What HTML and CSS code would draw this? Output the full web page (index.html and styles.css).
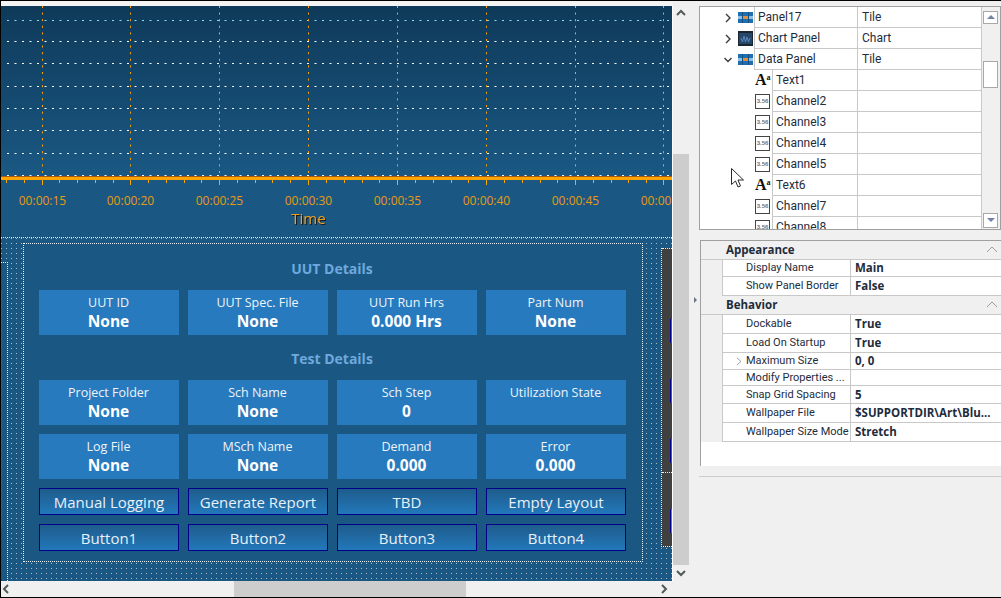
FILE: index.html
```html
<!DOCTYPE html>
<html lang="en">
<head>
  <meta charset="UTF-8">
  <title>Layout Designer</title>
  <link rel="stylesheet" href="styles.css">
</head>
<body>
  <div class="window">
    <!-- Designer canvas -->
    <div class="designer">
      <div class="top-strip"></div>
      <div class="viewport">
        <div class="canvas">
          <svg class="chart" width="671" height="231" viewBox="1 6 671 231">
            <defs>
              <linearGradient id="plotFill" x1="0" y1="0" x2="0" y2="1">
                <stop offset="0" stop-color="#0f3a5a"/>
                <stop offset="1" stop-color="#1a5883"/>
              </linearGradient>
            </defs>
            <rect x="1" y="6" width="671" height="171" fill="url(#plotFill)"/>
            <rect x="1" y="177" width="671" height="60" fill="#1a5883"/>
            <g class="grid-h">
              <path class="grid-first" d="M7 20.5H672"/>
              <path d="M7 41.5H672M7 63.5H672M7 86.5H672M7 108.5H672M7 130.5H672M7 153.5H672M7 175.5H672"/>
            </g>
            <path class="grid-v" d="M42.5 6V176M130.5 6V176M219.5 6V176M308.5 6V176M397.5 6V176M486.5 6V176M575.5 6V176M663.5 6V176"/>
            <rect x="1" y="176" width="671" height="1" fill="#a85a10"/>
            <rect x="1" y="177" width="671" height="3" fill="#ffa500"/>
            <path class="tick" d="M6.5 180V183M24.5 180V183M59.5 180V183M77.5 180V183M95.5 180V183M113.5 180V183M148.5 180V183M166.5 180V183M184.5 180V183M201.5 180V183M237.5 180V183M255.5 180V183M272.5 180V183M290.5 180V183M326.5 180V183M344.5 180V183M362.5 180V183M379.5 180V183M415.5 180V183M433.5 180V183M451.5 180V183M468.5 180V183M504.5 180V183M522.5 180V183M540.5 180V183M557.5 180V183M593.5 180V183M611.5 180V183M628.5 180V183M646.5 180V183"/>
            <path class="tick" d="M42.5 180V185M130.5 180V185M219.5 180V185M308.5 180V185M397.5 180V185M486.5 180V185M575.5 180V185M663.5 180V185"/>
            <g class="tick-labels">
              <text x="42.5" y="205">00:00:15</text>
              <text x="130.5" y="205">00:00:20</text>
              <text x="219.5" y="205">00:00:25</text>
              <text x="308.5" y="205">00:00:30</text>
              <text x="397.5" y="205">00:00:35</text>
              <text x="486.5" y="205">00:00:40</text>
              <text x="575.5" y="205">00:00:45</text>
              <text x="664.5" y="205">00:00:50</text>
            </g>
            <text class="axis-title" x="308.5" y="224">Time</text>
          </svg>

          <div class="lower">
            <div class="stub-left"><div class="stub-edge"></div></div>

            <div class="details">
              <h2 class="section-title">UUT Details</h2>
              <div class="card-grid">
                <div class="card"><span class="card-label">UUT ID</span><span class="card-value">None</span></div>
                <div class="card"><span class="card-label">UUT Spec. File</span><span class="card-value">None</span></div>
                <div class="card"><span class="card-label">UUT Run Hrs</span><span class="card-value">0.000 Hrs</span></div>
                <div class="card"><span class="card-label">Part Num</span><span class="card-value">None</span></div>
              </div>
              <h2 class="section-title second">Test Details</h2>
              <div class="card-grid">
                <div class="card"><span class="card-label">Project Folder</span><span class="card-value">None</span></div>
                <div class="card"><span class="card-label">Sch Name</span><span class="card-value">None</span></div>
                <div class="card"><span class="card-label">Sch Step</span><span class="card-value">0</span></div>
                <div class="card"><span class="card-label">Utilization State</span></div>
                <div class="card"><span class="card-label">Log File</span><span class="card-value">None</span></div>
                <div class="card"><span class="card-label">MSch Name</span><span class="card-value">None</span></div>
                <div class="card"><span class="card-label">Demand</span><span class="card-value">0.000</span></div>
                <div class="card"><span class="card-label">Error</span><span class="card-value">0.000</span></div>
                <button class="action">Manual Logging</button>
                <button class="action">Generate Report</button>
                <button class="action">TBD</button>
                <button class="action">Empty Layout</button>
                <button class="action">Button1</button>
                <button class="action">Button2</button>
                <button class="action">Button3</button>
                <button class="action">Button4</button>
              </div>
            </div>

            <div class="stub-right">
              <div class="stub-section first">
                <div class="stub-bar"></div>
                <div class="stub-bar"></div>
                <div class="stub-bar"></div>
              </div>
              <div class="stub-section">
                <div class="stub-bar warm"></div>
              </div>
            </div>
          </div>
        </div>

        <div class="vscroll">
          <div class="arrow-box up">
            <svg width="10" height="7" viewBox="0 0 10 7"><path class="chev-bold" d="M1 6L5 2L9 6"/></svg>
          </div>
          <div class="vthumb"></div>
          <div class="arrow-box down">
            <svg width="10" height="7" viewBox="0 0 10 7"><path class="chev-bold" d="M1 1L5 5L9 1"/></svg>
          </div>
        </div>
      </div>
      <div class="hscroll">
        <svg class="hs-left" width="7" height="10" viewBox="0 0 7 10"><path class="chev-bold" d="M6 1L2 5L6 9"/></svg>
        <div class="hthumb"></div>
        <svg class="hs-right" width="7" height="10" viewBox="0 0 7 10"><path class="chev-bold" d="M1 1L5 5L1 9"/></svg>
      </div>
    </div>

    <!-- Splitter -->
    <div class="splitter"><div class="splitter-arrow"></div></div>

    <!-- Right side panels -->
    <div class="side">
      <div class="tree">
        <div class="tree-body">
          <div class="tree-row">
            <div class="gutter top">
              <svg class="chev" width="8" height="10" viewBox="0 0 8 10"><path d="M2 1L6 5L2 9"/></svg>
              <svg class="tile-icon" width="15" height="11" viewBox="0 0 15 11"><use href="#tile"/></svg>
            </div>
            <div class="name-cell">Panel17</div>
            <div class="type-cell">Tile</div>
          </div>
          <div class="tree-row">
            <div class="gutter top">
              <svg class="chev" width="8" height="10" viewBox="0 0 8 10"><path d="M2 1L6 5L2 9"/></svg>
              <svg class="tile-icon" width="15" height="15" viewBox="0 0 15 15">
                <rect width="15" height="15" fill="#1c2630"/>
                <rect x="1" y="2" width="13" height="11" fill="#24476a"/>
                <path d="M3 7L4.5 11L6 5L7.5 11L9 6L10.5 11L12 7" fill="none" stroke="#5a86c0" stroke-width="1"/>
              </svg>
            </div>
            <div class="name-cell">Chart Panel</div>
            <div class="type-cell">Chart</div>
          </div>
          <div class="tree-row">
            <div class="gutter top">
              <svg class="chev" width="8" height="10" viewBox="0 0 8 10"><path d="M0.5 3L4 6.5L7.5 3"/></svg>
              <svg class="tile-icon" width="15" height="11" viewBox="0 0 15 11">
                <g id="tile">
                  <rect width="15" height="11" fill="#1f6fb0"/>
                  <rect y="4" width="15" height="3" fill="#8fc0e2"/>
                  <rect x="5" y="4" width="5" height="3" fill="#e09040"/>
                  <path d="M4.5 0V11M10.5 0V11" stroke="#124f84" stroke-width="1"/>
                </g>
              </svg>
            </div>
            <div class="name-cell">Data Panel</div>
            <div class="type-cell">Tile</div>
          </div>
          <div class="tree-row">
            <div class="gutter child"><span class="text-icon">A<span class="text-icon-sup">a</span></span></div>
            <div class="name-cell">Text1</div>
            <div class="type-cell"></div>
          </div>
          <div class="tree-row">
            <div class="gutter child"><span class="num-icon">3.56</span></div>
            <div class="name-cell">Channel2</div>
            <div class="type-cell"></div>
          </div>
          <div class="tree-row">
            <div class="gutter child"><span class="num-icon">3.56</span></div>
            <div class="name-cell">Channel3</div>
            <div class="type-cell"></div>
          </div>
          <div class="tree-row">
            <div class="gutter child"><span class="num-icon">3.56</span></div>
            <div class="name-cell">Channel4</div>
            <div class="type-cell"></div>
          </div>
          <div class="tree-row">
            <div class="gutter child"><span class="num-icon">3.56</span></div>
            <div class="name-cell">Channel5</div>
            <div class="type-cell"></div>
          </div>
          <div class="tree-row">
            <div class="gutter child"><span class="text-icon">A<span class="text-icon-sup">a</span></span></div>
            <div class="name-cell">Text6</div>
            <div class="type-cell"></div>
          </div>
          <div class="tree-row">
            <div class="gutter child"><span class="num-icon">3.56</span></div>
            <div class="name-cell">Channel7</div>
            <div class="type-cell"></div>
          </div>
          <div class="tree-row">
            <div class="gutter child"><span class="num-icon">3.56</span></div>
            <div class="name-cell">Channel8</div>
            <div class="type-cell"></div>
          </div>
        </div>
        <div class="tree-scroll">
          <div class="ts-button up"><div class="tri-up"></div></div>
          <div class="ts-thumb"></div>
          <div class="ts-button down"><div class="tri-down"></div></div>
        </div>
      </div>

      <div class="props">
        <div class="prop-head">
          <span>Appearance</span>
          <svg width="12" height="7" viewBox="0 0 12 7"><path class="chev-light" d="M1 6L6 1L11 6"/></svg>
        </div>
        <div class="prop-row h17"><div class="prop-name">Display Name</div><div class="prop-value">Main</div></div>
        <div class="prop-row"><div class="prop-name">Show Panel Border</div><div class="prop-value">False</div></div>
        <div class="prop-head">
          <span>Behavior</span>
          <svg width="12" height="7" viewBox="0 0 12 7"><path class="chev-light" d="M1 6L6 1L11 6"/></svg>
        </div>
        <div class="prop-row"><div class="prop-name">Dockable</div><div class="prop-value">True</div></div>
        <div class="prop-row"><div class="prop-name">Load On Startup</div><div class="prop-value">True</div></div>
        <div class="prop-row h17">
          <div class="prop-name">
            <svg class="prop-chev" width="6" height="9" viewBox="0 0 6 9"><path class="chev-light" d="M1 1L5 4.5L1 8"/></svg>
            Maximum Size
          </div>
          <div class="prop-value">0, 0</div>
        </div>
        <div class="prop-row h16"><div class="prop-name">Modify Properties ...</div><div class="prop-value"></div></div>
        <div class="prop-row h18"><div class="prop-name">Snap Grid Spacing</div><div class="prop-value">5</div></div>
        <div class="prop-row"><div class="prop-name">Wallpaper File</div><div class="prop-value">$SUPPORTDIR\Art\Blu...</div></div>
        <div class="prop-row"><div class="prop-name">Wallpaper Size Mode</div><div class="prop-value">Stretch</div></div>
      </div>

      <div class="side-rule"></div>
    </div>

    <!-- Mouse pointer -->
    <svg class="pointer" width="13" height="20" viewBox="0 0 13 20">
      <path d="M0.5 0.5V16.5L4.5 13L7 19L9.5 18L7 12H12.5Z" fill="#fff" stroke="#2a2a2a" stroke-width="1"/>
    </svg>
  </div>
</body>
</html>
```

FILE: styles.css
```css
/* General Styles */
* {
  box-sizing: border-box;
}

html, body {
  margin: 0;
  padding: 0;
}

body {
  width: 1001px;
  height: 598px;
  overflow: hidden;
  background-color: #f0f0f0;
  font-family: 'Open Sans', sans-serif;
}

.window {
  position: relative;
  display: flex;
  width: 1001px;
  height: 598px;
  border-top: 1px solid #000;
  border-bottom: 1px solid #000;
  border-left: 1px solid #000;
}

/* Designer */
.designer {
  display: flex;
  flex-direction: column;
  width: 688px;
}

.top-strip {
  height: 5px;
  background-color: #f4f4f4;
  margin-right: 16px;
}

.viewport {
  display: flex;
  height: 575px;
}

.canvas {
  width: 672px;
  border-right: 1px solid #fff;
  background-color: #1a5883;
}

.vscroll {
  display: flex;
  flex-direction: column;
  width: 16px;
  margin-top: -5px;
  height: 580px;
}

.arrow-box {
  display: flex;
  align-items: center;
  justify-content: center;
}

.arrow-box.up {
  height: 22px;
  margin-bottom: 131px;
}

.arrow-box.down {
  height: 16px;
}

.vthumb {
  height: 411px;
  background-color: #cdcdcd;
}

.chev-bold {
  fill: none;
  stroke: #505a5a;
  stroke-width: 2;
}

.hscroll {
  display: flex;
  align-items: center;
  height: 16px;
  width: 672px;
  padding-left: 1px;
}

.hs-left {
  margin-right: 225px;
}

.hthumb {
  width: 232px;
  height: 16px;
  background-color: #cdcdcd;
}

.hs-right {
  margin-left: 195px;
}

/* Chart */
.chart {
  display: block;
}

.grid-h path {
  fill: none;
  stroke: #fff;
  stroke-width: 1;
  stroke-dasharray: 2 5.5;
}

.grid-h .grid-first {
  stroke: #8fdcff;
}

.grid-v {
  fill: none;
  stroke: #ffa500;
  stroke-width: 1;
  stroke-dasharray: 2 4.6;
}

.tick {
  fill: none;
  stroke: #ffa500;
  stroke-width: 1;
}

.tick-labels text {
  fill: #e89a12;
  font-family: 'Open Sans', sans-serif;
  font-size: 12px;
  text-anchor: middle;
}

.axis-title {
  fill: #f0a020;
  font-family: 'Open Sans', sans-serif;
  font-size: 15px;
  text-anchor: middle;
  filter: drop-shadow(1px 1px 0 #1a1a1a);
}

/* Lower area */
.lower {
  display: flex;
  align-items: flex-start;
  height: 344px;
  border-top: 1px dotted #dfe8ee;
  background-color: #1a5883;
  background-image: radial-gradient(circle at 0.5px 0.5px, #a9bcc8 0.5px, transparent 0.55px);
  background-size: 5px 5px;
}

.stub-left {
  width: 7px;
  height: 319px;
  margin-top: 24px;
  padding-top: 27px;
  background-color: #1a5883;
  border-top: 1px dotted #e8eef2;
  border-right: 1px dotted #e8eef2;
}

.stub-edge {
  width: 1px;
  height: 238px;
  background-color: #8a4a14;
}

.details {
  width: 620px;
  height: 319px;
  margin-top: 5px;
  margin-left: 15px;
  padding: 14px 15px 0;
  background-color: #1a5883;
  border: 1px dotted #e8eef2;
}

.section-title {
  height: 22px;
  margin: 0 0 10px;
  padding-right: 2px;
  color: #6fa8dc;
  font-size: 14px;
  font-weight: 700;
  line-height: 22px;
  text-align: center;
}

.section-title.second {
  margin-top: 13px;
}

.card-grid {
  display: grid;
  grid-template-columns: repeat(4, 140px);
  gap: 9px;
}

.card {
  display: flex;
  flex-direction: column;
  align-items: center;
  height: 45px;
  padding: 3px 1px 0 0;
  background-color: #277abd;
  color: #fff;
}

.card-label {
  height: 19px;
  font-size: 12.5px;
  line-height: 19px;
  color: #eef4fa;
}

.card-value {
  height: 20px;
  margin-top: -1px;
  font-size: 15.5px;
  font-weight: 700;
  line-height: 20px;
}

.action {
  height: 27px;
  padding: 0;
  border: 1px solid #00008b;
  background: linear-gradient(#1f5c8c, #2278ba);
  color: #e8f0f8;
  font-family: 'Open Sans', sans-serif;
  font-size: 15px;
}

.stub-right {
  width: 11px;
  height: 299px;
  margin-top: 10px;
  margin-left: 18px;
  background-color: #404040;
  border-left: 1px dotted #e8eef2;
  border-bottom: 1px dotted #e8eef2;
}

.stub-section {
  display: flex;
  flex-direction: column;
  align-items: flex-end;
  height: 74px;
  padding-top: 36px;
  border-top: 1px dotted #e8eef2;
}

.stub-section.first {
  height: 224px;
  padding-top: 70px;
}

.stub-bar {
  flex: none;
  width: 2px;
  height: 24px;
  margin-bottom: 36px;
  border-left: 1px solid #00008b;
  background-color: #1f6cab;
}

.stub-bar.warm {
  background-color: #b06a30;
}

/* Splitter */
.splitter {
  width: 10px;
  padding: 296px 0 0 5px;
}

.splitter-arrow {
  width: 0;
  height: 0;
  border-top: 3px solid transparent;
  border-bottom: 3px solid transparent;
  border-left: 3px solid #6a7480;
}

/* Side panels */
.side {
  display: flex;
  flex-direction: column;
  width: 302px;
  padding-top: 5px;
  color: #1e2c3c;
  font-family: 'Roboto', sans-serif;
  font-size: 12px;
}

.tree {
  display: flex;
  height: 224px;
  border: 1px solid #a0a0a0;
  background-color: #fff;
  overflow: hidden;
}

.tree-body {
  width: 282px;
  flex: none;
}

.tree-row {
  display: flex;
  height: 21px;
  line-height: 21px;
}

.gutter {
  display: flex;
  align-items: center;
  flex: none;
  height: 21px;
}

.gutter.top {
  width: 54px;
  padding-left: 24px;
}

.gutter.child {
  width: 72px;
  padding-left: 55px;
}

.chev {
  margin-right: 6px;
}

.chev path {
  fill: none;
  stroke: #3a3a3a;
  stroke-width: 1.4;
}

.name-cell {
  flex: 1;
  padding-left: 3px;
  border-left: 1px solid #c8c8c8;
  border-bottom: 1px solid #c8c8c8;
  white-space: nowrap;
}

.type-cell {
  flex: none;
  width: 125px;
  padding-left: 4px;
  border-left: 1px solid #c8c8c8;
  border-right: 1px solid #c8c8c8;
  border-bottom: 1px solid #c8c8c8;
}

.text-icon {
  color: #111;
  font-family: 'Liberation Serif', serif;
  font-size: 16px;
  font-weight: 700;
  line-height: 15px;
}

.text-icon-sup {
  position: relative;
  top: -5px;
  font-size: 8px;
}

.num-icon {
  display: block;
  width: 15px;
  height: 15px;
  border: 1px solid #444;
  background-color: #fff;
  color: #6a7482;
  font-family: 'Liberation Sans', sans-serif;
  font-size: 6px;
  font-weight: 700;
  line-height: 13px;
  text-align: center;
}

.tree-scroll {
  display: flex;
  flex-direction: column;
  flex: 1;
  padding: 4px 2px 1px 1px;
  background-color: #f0f0f0;
}

.ts-button {
  display: flex;
  align-items: center;
  justify-content: center;
  height: 13px;
  border: 1px solid #a8a8a8;
  background-color: #fff;
}

.ts-button.down {
  height: 16px;
  margin-top: 125px;
}

.ts-thumb {
  height: 28px;
  margin-top: 37px;
  border: 1px solid #a8a8a8;
  background-color: #fff;
}

.tri-up {
  width: 0;
  height: 0;
  border-left: 4px solid transparent;
  border-right: 4px solid transparent;
  border-bottom: 4px solid #7480a8;
}

.tri-down {
  width: 0;
  height: 0;
  border-left: 4px solid transparent;
  border-right: 4px solid transparent;
  border-top: 4px solid #7480a8;
}

/* Property grid */
.props {
  width: 301px;
  height: 226px;
  margin-top: 10px;
  margin-left: 1px;
  border-top: 1px solid #a0a0a0;
  border-left: 1px solid #a0a0a0;
  background-color: #fff;
  font-size: 11.5px;
}

.prop-head {
  display: flex;
  align-items: center;
  justify-content: space-between;
  height: 19px;
  padding: 0 3px 1px 25px;
  background-color: #f0f0f0;
  border-bottom: 1px solid #c8c8c8;
  font-family: 'Open Sans', sans-serif;
  font-weight: 700;
}

.prop-row {
  display: flex;
  height: 19px;
  margin-left: 21px;
  box-shadow: -21px 0 0 #f0f0f0;
  border-bottom: 1px solid #c8c8c8;
  line-height: 18px;
}

.prop-row.h18 {
  height: 18px;
  line-height: 18px;
}

.prop-row.h17 {
  height: 17px;
  line-height: 16px;
}

.prop-row.h16 {
  height: 16px;
  line-height: 16px;
}

.prop-name {
  position: relative;
  width: 129px;
  padding-left: 23px;
  border-left: 1px solid #c8c8c8;
  border-right: 1px solid #c8c8c8;
  font-size: 11px;
  white-space: nowrap;
}

.prop-chev {
  position: absolute;
  left: 13px;
  top: 4px;
}

.chev-light {
  fill: none;
  stroke: #a0a0a0;
  stroke-width: 1;
}

.prop-value {
  flex: 1;
  padding-left: 4px;
  font-family: 'Open Sans', sans-serif;
  font-weight: 700;
  white-space: nowrap;
}

.side-rule {
  height: 1px;
  margin-top: 10px;
  background-color: #cccccc;
}

/* Mouse pointer */
.pointer {
  position: absolute;
  left: 730px;
  top: 167px;
}
```
